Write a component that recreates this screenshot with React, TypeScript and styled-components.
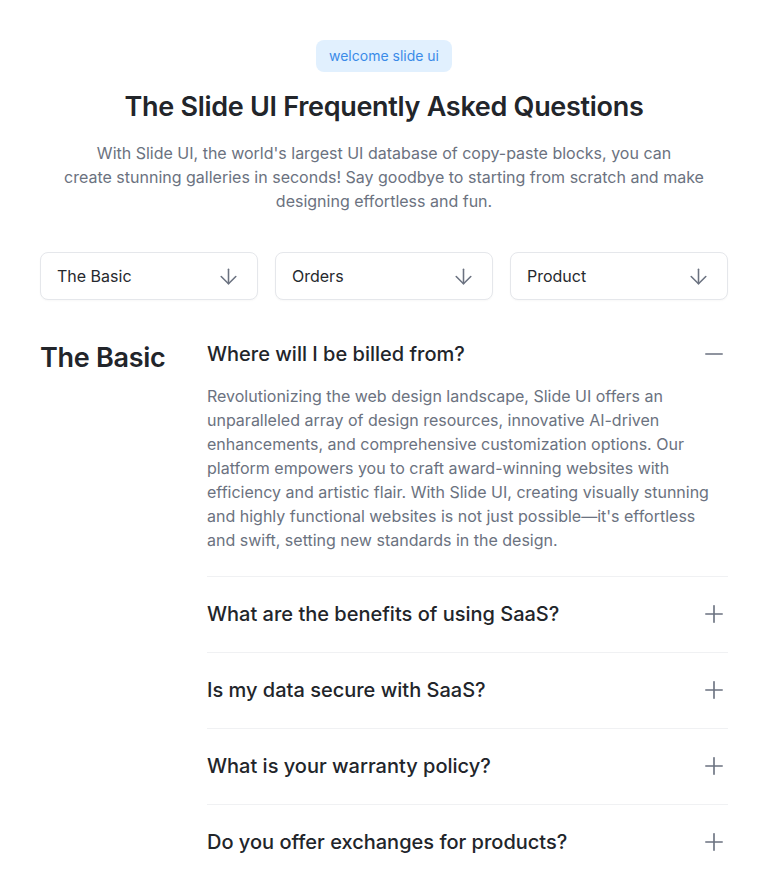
import React, { useState } from "react";
import styled, { createGlobalStyle } from "styled-components";
import { ArrowDown, Minus, Plus } from "lucide-react";

const Global = createGlobalStyle`
  * { box-sizing: border-box; }
  html, body { margin: 0; padding: 0; background: #ffffff; }
  body { font-family: Inter, "Noto Sans", sans-serif; -webkit-font-smoothing: antialiased; }
`;

const Page = styled.div`
  padding: 40px 40px 0;
  display: flex;
  flex-direction: column;
  align-items: center;
`;

const Badge = styled.span`
  display: inline-flex;
  align-items: center;
  height: 32px;
  padding: 0 13px;
  border-radius: 8px;
  background: #e1f0fe;
  color: #3b8be8;
  font-size: 14px;
  line-height: 20px;
`;

const Title = styled.h1`
  margin: 17px 0 0;
  font-size: 27px;
  line-height: 36px;
  font-weight: 600;
  color: #22252a;
  letter-spacing: -0.3px;
  text-align: center;
`;

const Lead = styled.p`
  margin: 16px 0 0;
  max-width: 680px;
  font-size: 16px;
  line-height: 24px;
  color: #6b7280;
  text-align: center;
`;

const Tabs = styled.div`
  margin-top: 39px;
  width: 100%;
  display: grid;
  grid-template-columns: repeat(3, 1fr);
  gap: 17px;
`;

const TabButton = styled.button`
  height: 48px;
  display: flex;
  align-items: center;
  justify-content: space-between;
  padding: 0 16px 0 16px;
  border: 1px solid #e5e7eb;
  border-radius: 8px;
  background: #fff;
  font-family: inherit;
  font-size: 16px;
  color: #26292e;
  box-shadow: 0 1px 2px rgba(0, 0, 0, 0.03);
  cursor: pointer;
`;

const Section = styled.div`
  margin-top: 17px;
  width: 100%;
  display: grid;
  grid-template-columns: 167px 1fr;
`;

const SectionTitle = styled.h2`
  margin: 23px 0 0;
  font-size: 27px;
  line-height: 36px;
  font-weight: 600;
  color: #22252a;
  letter-spacing: -0.3px;
`;

const List = styled.div`
  display: flex;
  flex-direction: column;
`;

const Item = styled.div<{ $last?: boolean }>`
  padding: 23px 0 24px;
  border-bottom: ${(p) => (p.$last ? "none" : "1px solid #f0f1f3")};
`;

const Question = styled.button`
  width: 100%;
  display: flex;
  align-items: center;
  justify-content: space-between;
  padding: 0;
  border: none;
  background: none;
  font-family: inherit;
  font-size: 20px;
  line-height: 28px;
  font-weight: 500;
  color: #22252a;
  text-align: left;
  cursor: pointer;
  & > svg { flex: none; margin: -4px 0; }
`;

const Answer = styled.p`
  margin: 16px 0 0;
  padding-right: 8px;
  font-size: 16px;
  line-height: 24px;
  color: #6b7280;
`;

const ICON = "#6b7280";

const faqs = [
  {
    q: "Where will I be billed from?",
    a: "Revolutionizing the web design landscape, Slide UI offers an unparalleled array of design resources, innovative AI-driven enhancements, and comprehensive customization options. Our platform empowers you to craft award-winning websites with efficiency and artistic flair. With Slide UI, creating visually stunning and highly functional websites is not just possible—it's effortless and swift, setting new standards in the design.",
  },
  { q: "What are the benefits of using SaaS?", a: "" },
  { q: "Is my data secure with SaaS?", a: "" },
  { q: "What is your warranty policy?", a: "" },
  { q: "Do you offer exchanges for products?", a: "" },
];

export default function App() {
  const [open, setOpen] = useState(0);
  return (
    <Page>
      <Global />
      <Badge>welcome slide ui</Badge>
      <Title>The Slide UI Frequently Asked Questions</Title>
      <Lead>
        With Slide UI, the world's largest UI database of copy-paste blocks, you can
        <br />
        create stunning galleries in seconds! Say goodbye to starting from scratch and make
        designing effortless and fun.
      </Lead>
      <Tabs>
        {["The Basic", "Orders", "Product"].map((t) => (
          <TabButton key={t}>
            {t}
            <ArrowDown size={25} strokeWidth={1.5} color={ICON} />
          </TabButton>
        ))}
      </Tabs>
      <Section>
        <SectionTitle>The Basic</SectionTitle>
        <List>
          {faqs.map((f, i) => (
            <Item key={f.q} $last={i === faqs.length - 1}>
              <Question onClick={() => setOpen(open === i ? -1 : i)}>
                {f.q}
                {open === i ? (
                  <Minus size={28} strokeWidth={1.4} color={ICON} />
                ) : (
                  <Plus size={28} strokeWidth={1.4} color={ICON} />
                )}
              </Question>
              {open === i && f.a && <Answer>{f.a}</Answer>}
            </Item>
          ))}
        </List>
      </Section>
    </Page>
  );
}
